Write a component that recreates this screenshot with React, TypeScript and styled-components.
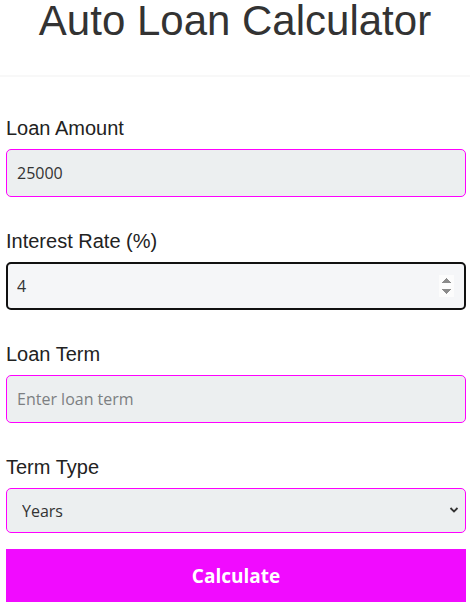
import React, { useState } from "react"
import styled, { createGlobalStyle } from "styled-components"

const GlobalStyle = createGlobalStyle`
    html, body {
        margin: 0;
        padding: 0;
        background: #ffffff;
    }
    * {
        box-sizing: border-box;
    }
`

const Page = styled.div`
    width: 470px;
    font-family: "Liberation Sans", Arial, sans-serif;
`

const Header = styled.header`
    height: 77px;
    border-bottom: 2px solid #f8f8f8;
    text-align: center;
`

const Title = styled.h1`
    margin: 0;
    font-size: 42px;
    line-height: 42px;
    font-weight: 400;
    color: #333333;
`

const Form = styled.form`
    display: flex;
    flex-direction: column;
    width: 460px;
    margin: 40px 0 0 6px;
`

const Field = styled.div`
    display: flex;
    flex-direction: column;
    gap: 9px;
    margin-bottom: 33px;

    &:last-of-type {
        margin-bottom: 16px;
    }
`

const Label = styled.label`
    font-size: 20px;
    line-height: 23px;
    color: #222222;
`

const Input = styled.input<{ $active?: boolean }>`
    width: 100%;
    height: 48px;
    padding: 0 10px;
    border-radius: 5px;
    border: ${p => (p.$active ? "2px solid #111111" : "1px solid #ff00ff")};
    padding-left: ${p => (p.$active ? "9px" : "10px")};
    background: ${p => (p.$active ? "#f5f6f8" : "#eceff0")};
    font-family: "Open Sans", "Noto Sans", sans-serif;
    font-size: 16px;
    color: #333333;
    outline: none;

    &::placeholder {
        color: #7c7f82;
    }
`

const SelectWrap = styled.div`
    position: relative;
`

const Select = styled.select`
    width: 100%;
    height: 45px;
    padding: 0 30px 0 15px;
    border-radius: 5px;
    border: 1px solid #ff00ff;
    background: #eceff0;
    font-family: "Open Sans", "Noto Sans", sans-serif;
    font-size: 16px;
    color: #333333;
    appearance: none;
    outline: none;
`

const Chevron = styled.svg`
    position: absolute;
    right: 7px;
    top: 18px;
    pointer-events: none;
`

const Button = styled.button`
    height: 53px;
    border: none;
    background: #f10bff;
    color: #ffffff;
    font-family: "Open Sans", "Noto Sans", sans-serif;
    font-weight: 700;
    font-size: 19px;
    cursor: pointer;
`

function App() {
    const [amount, setAmount] = useState("25000")
    const [rate, setRate] = useState("4")
    const [term, setTerm] = useState("")
    const [termType, setTermType] = useState("years")

    return (
        <Page>
            <GlobalStyle />
            <Header>
                <Title>Auto Loan Calculator</Title>
            </Header>
            <Form onSubmit={e => e.preventDefault()}>
                <Field>
                    <Label htmlFor="amount">Loan Amount</Label>
                    <Input id="amount" type="number" value={amount} onChange={e => setAmount(e.target.value)} />
                </Field>
                <Field>
                    <Label htmlFor="rate">Interest Rate (%)</Label>
                    <Input id="rate" type="number" $active autoFocus value={rate} onChange={e => setRate(e.target.value)} />
                </Field>
                <Field>
                    <Label htmlFor="term">Loan Term</Label>
                    <Input id="term" type="number" placeholder="Enter loan term" value={term} onChange={e => setTerm(e.target.value)} />
                </Field>
                <Field>
                    <Label htmlFor="termType">Term Type</Label>
                    <SelectWrap>
                        <Select id="termType" value={termType} onChange={e => setTermType(e.target.value)}>
                            <option value="years">Years</option>
                            <option value="months">Months</option>
                        </Select>
                        <Chevron width="10" height="8" viewBox="0 0 10 8">
                            <path d="M1.5 2 L5 5.5 L8.5 2" fill="none" stroke="#333" strokeWidth="1.8" />
                        </Chevron>
                    </SelectWrap>
                </Field>
                <Button type="submit">Calculate</Button>
            </Form>
        </Page>
    )
}

export default App
